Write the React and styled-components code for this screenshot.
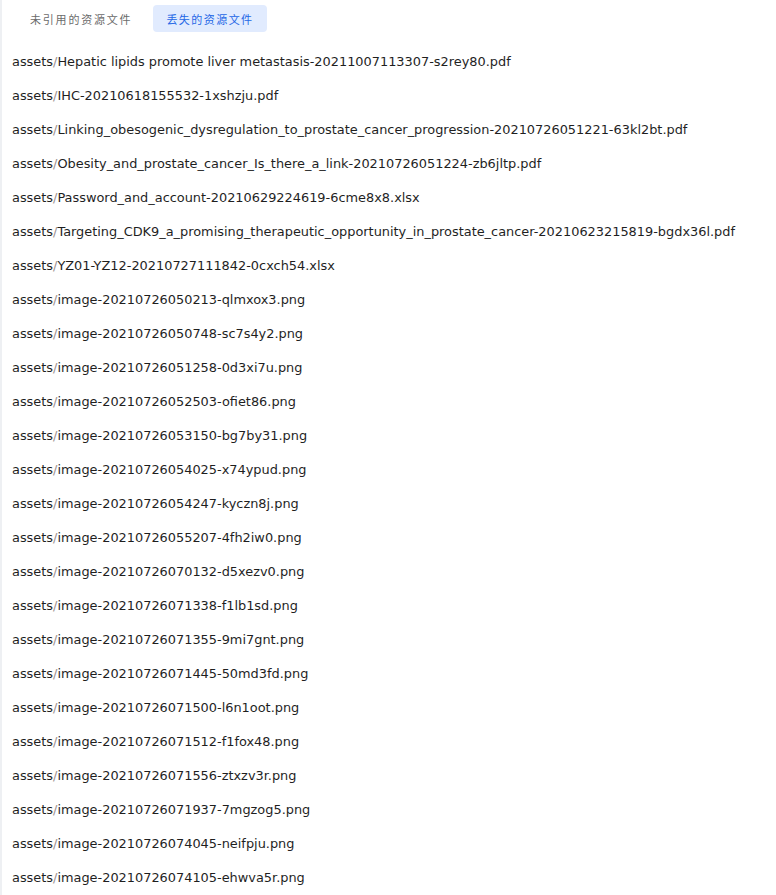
import React from 'react';
import styled, { createGlobalStyle } from 'styled-components';

const GlobalStyle = createGlobalStyle`
  body {
    margin: 0;
    background: #fff;
    font-family: "DejaVu Sans", "Noto Sans CJK SC", sans-serif;
  }
`;

const Panel = styled.div`
  border-left: 2px solid #eef0f3;
  min-height: 895px;
  box-sizing: border-box;
`;

const TabBar = styled.div`
  display: flex;
  align-items: center;
  gap: 8px;
  padding: 5px 0 0 15px;
`;

const Tab = styled.button`
  height: 27px;
  padding: 0 13px;
  border: 0;
  border-radius: 4px;
  font-family: "Noto Sans CJK SC", sans-serif;
  font-size: 11px;
  letter-spacing: ${props => props.active ? '1.45px' : '1.8px'};
  background: ${props => props.active ? '#e1ebfe' : 'transparent'};
  color: ${props => props.active ? '#2467e6' : '#6b6b6b'};
  cursor: pointer;
`;

const FileList = styled.ul`
  list-style: none;
  margin: 0;
  padding: 13px 0 0 10px;
`;

const FileRow = styled.li`
  height: 34px;
  line-height: 34px;
  font-size: 12.9px;
  color: #1f1f1f;
  white-space: nowrap;
`;

const Slash = styled.span`
  color: #9b8f8f;
`;

const files = [
  'Hepatic lipids promote liver metastasis-20211007113307-s2rey80.pdf',
  'IHC-20210618155532-1xshzju.pdf',
  'Linking_obesogenic_dysregulation_to_prostate_cancer_progression-20210726051221-63kl2bt.pdf',
  'Obesity_and_prostate_cancer_Is_there_a_link-20210726051224-zb6jltp.pdf',
  'Password_and_account-20210629224619-6cme8x8.xlsx',
  'Targeting_CDK9_a_promising_therapeutic_opportunity_in_prostate_cancer-20210623215819-bgdx36l.pdf',
  'YZ01-YZ12-20210727111842-0cxch54.xlsx',
  'image-20210726050213-qlmxox3.png',
  'image-20210726050748-sc7s4y2.png',
  'image-20210726051258-0d3xi7u.png',
  'image-20210726052503-ofiet86.png',
  'image-20210726053150-bg7by31.png',
  'image-20210726054025-x74ypud.png',
  'image-20210726054247-kyczn8j.png',
  'image-20210726055207-4fh2iw0.png',
  'image-20210726070132-d5xezv0.png',
  'image-20210726071338-f1lb1sd.png',
  'image-20210726071355-9mi7gnt.png',
  'image-20210726071445-50md3fd.png',
  'image-20210726071500-l6n1oot.png',
  'image-20210726071512-f1fox48.png',
  'image-20210726071556-ztxzv3r.png',
  'image-20210726071937-7mgzog5.png',
  'image-20210726074045-neifpju.png',
  'image-20210726074105-ehwva5r.png',
];

export default function App() {
  return (
    <>
      <GlobalStyle />
      <Panel>
        <TabBar>
          <Tab>未引用的资源文件</Tab>
          <Tab active>丢失的资源文件</Tab>
        </TabBar>
        <FileList>
          {files.map(name => (
            <FileRow key={name}>assets<Slash>/</Slash>{name}</FileRow>
          ))}
        </FileList>
      </Panel>
    </>
  );
}
